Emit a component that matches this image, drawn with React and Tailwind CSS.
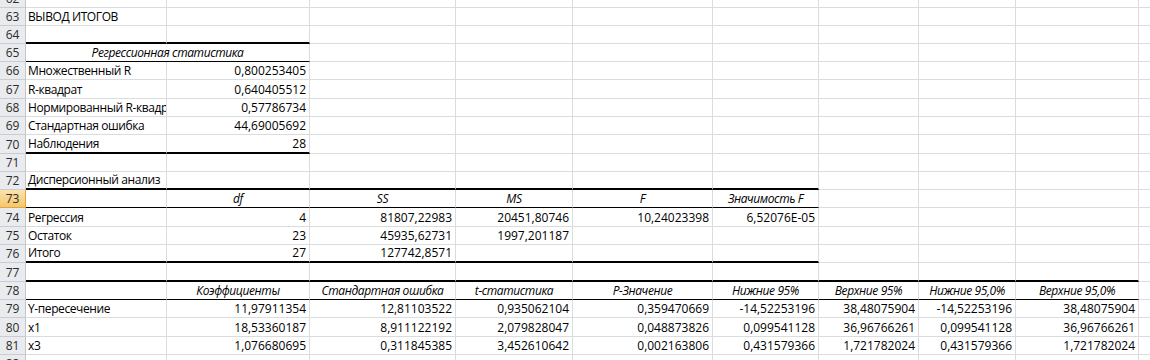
const COL_W = [
  'w-[141px]', 'w-[143px]', 'w-[146px]', 'w-[117px]', 'w-[140px]',
  'w-[106px]', 'w-[100px]', 'w-[97px]', 'w-[123px]', 'w-[60px]',
]

const H = {
  8: 'h-[8px]',
  17: 'h-[17px]',
  18: 'h-[18px]',
  19: 'h-[19px]',
}

// bottom: [kind, how many columns from A]
const rows = [
  { n: 62, h: 8, cells: [] },
  { n: 63, h: 18, cells: ['ВЫВОД ИТОГОВ'], spill: true },
  { n: 64, h: 18, cells: [], bottom: ['thick', 2] },
  { n: 65, h: 18, merged: 'Регрессионная статистика', bottom: ['thin', 2] },
  { n: 66, h: 18, cells: ['Множественный R', '0,800253405'] },
  { n: 67, h: 19, cells: ['R-квадрат', '0,640405512'] },
  { n: 68, h: 18, cells: ['Нормированный R-квадрат', '0,57786734'] },
  { n: 69, h: 18, cells: ['Стандартная ошибка', '44,69005692'] },
  { n: 70, h: 19, cells: ['Наблюдения', '28'], bottom: ['thick', 2] },
  { n: 71, h: 18, cells: [] },
  { n: 72, h: 18, cells: ['Дисперсионный анализ'], spill: true, bottom: ['thick', 6] },
  { n: 73, h: 18, active: true, head: true, cells: ['', 'df', 'SS', 'MS', 'F', 'Значимость F'], bottom: ['thin', 6] },
  { n: 74, h: 19, cells: ['Регрессия', '4', '81807,22983', '20451,80746', '10,24023398', '6,52076E-05'] },
  { n: 75, h: 18, cells: ['Остаток', '23', '45935,62731', '1997,201187'] },
  { n: 76, h: 18, cells: ['Итого', '27', '127742,8571'], bottom: ['thick', 6] },
  { n: 77, h: 19, cells: [], bottom: ['thick', 9] },
  {
    n: 78, h: 18, head: true,
    cells: ['', 'Коэффициенты', 'Стандартная ошибка', 't-статистика', 'P-Значение', 'Нижние 95%', 'Верхние 95%', 'Нижние 95,0%', 'Верхние 95,0%'],
    bottom: ['thin', 9],
  },
  { n: 79, h: 18, cells: ['Y-пересечение', '11,97911354', '12,81103522', '0,935062104', '0,359470669', '-14,52253196', '38,48075904', '-14,52253196', '38,48075904'] },
  { n: 80, h: 19, cells: ['x1', '18,53360187', '8,911122192', '2,079828047', '0,048873826', '0,099541128', '36,96766261', '0,099541128', '36,96766261'] },
  { n: 81, h: 18, cells: ['x3', '1,076680695', '0,311845385', '3,452610642', '0,002163806', '0,431579366', '1,721782024', '0,431579366', '1,721782024'] },
  { n: 82, h: 18, cells: [] },
]

const isNum = (t) => /^-?[\d,]+(E-\d+)?$/.test(t)

function bottomClass(row, i) {
  if (!row.bottom || i >= row.bottom[1]) return 'border-b border-b-[#dadcdd]'
  return row.bottom[0] === 'thick' ? 'border-b-2 border-b-black' : 'border-b border-b-black'
}

function Cell({ row, i, text }) {
  const head = row.head && text
  const num = text && isNum(text)
  const align = head ? 'justify-center' : num ? 'justify-end pr-[3px]' : 'justify-start pl-[2px]'
  // text in column A may run into an empty neighbour, as Excel does
  const clip = row.spill && i === 0 ? 'overflow-visible' : 'overflow-hidden'
  return (
    <div className={`${COL_W[i]} shrink-0 h-full flex items-end ${clip} border-r border-r-[#dadcdd] ${bottomClass(row, i)} ${align}`}>
      <span className={`shrink-0 whitespace-nowrap leading-[17px] ${head ? 'italic' : ''} ${num ? '' : 'tracking-[-0.4px]'}`}>{text}</span>
    </div>
  )
}

function Row({ row }) {
  const cells = []
  if (row.merged) {
    cells.push(
      <div key="m" className="w-[284px] shrink-0 h-full flex items-end justify-center border-r border-r-[#dadcdd] border-b border-b-black">
        <span className="italic whitespace-nowrap leading-[17px] tracking-[-0.4px]">{row.merged}</span>
      </div>
    )
    for (let i = 2; i < 10; i++) cells.push(<Cell key={i} row={row} i={i} text="" />)
  } else {
    for (let i = 0; i < 10; i++) cells.push(<Cell key={i} row={row} i={i} text={row.cells[i] || ''} />)
  }

  return (
    <div className={`${H[row.h]} flex items-stretch overflow-hidden`}>
      <div
        className={`w-[26px] shrink-0 h-full flex items-end justify-center border-r border-b text-[#2b2b2b] ${
          row.active
            ? 'bg-gradient-to-b from-[#fbe2ad] to-[#f5c76a] border-r-[#e3a23a] border-b-[#e3a23a]'
            : 'bg-[#e9ebee] border-r-[#c3c7cc] border-b-[#c9ccd1]'
        }`}
      >
        <span className="leading-[17px]">{row.n}</span>
      </div>
      {cells}
    </div>
  )
}

export default function App() {
  return (
    <div className="w-[1150px] h-[360px] overflow-hidden bg-white text-black text-[12px] font-['Open_Sans',sans-serif]">
      {rows.map(r => <Row key={r.n} row={r} />)}
    </div>
  )
}
